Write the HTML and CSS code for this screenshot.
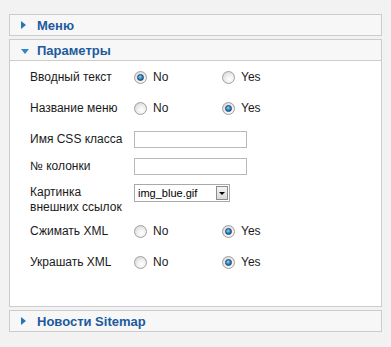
FILE: index.html
```html
<!DOCTYPE html>
<html lang="ru">
<head>
  <meta charset="UTF-8">
  <title>Параметры</title>
  <link rel="stylesheet" href="styles.css">
</head>
<body>
  <div class="pane">
    <div class="pane-title"><span class="arrow-right"></span>Меню</div>
  </div>

  <div class="pane">
    <div class="pane-title open"><span class="arrow-down"></span>Параметры</div>
    <div class="pane-body">
      <div class="row first">
        <div class="label">Вводный текст</div>
        <div class="options">
          <span class="opt"><span class="radio checked"></span>No</span>
          <span class="opt"><span class="radio"></span>Yes</span>
        </div>
      </div>
      <div class="row radio-row">
        <div class="label">Название меню</div>
        <div class="options">
          <span class="opt"><span class="radio"></span>No</span>
          <span class="opt"><span class="radio checked"></span>Yes</span>
        </div>
      </div>
      <div class="row input-row">
        <div class="label">Имя CSS класса</div>
        <div class="text-input"></div>
      </div>
      <div class="row input-row second">
        <div class="label">№ колонки</div>
        <div class="text-input"></div>
      </div>
      <div class="row select-row">
        <div class="label">Картинка<br>внешних ссылок</div>
        <div class="select">
          <span class="select-value">img_blue.gif</span>
          <span class="select-btn"><span class="select-caret"></span></span>
        </div>
      </div>
      <div class="row radio-row after-select">
        <div class="label">Сжимать XML</div>
        <div class="options">
          <span class="opt"><span class="radio"></span>No</span>
          <span class="opt"><span class="radio checked"></span>Yes</span>
        </div>
      </div>
      <div class="row radio-row">
        <div class="label">Украшать XML</div>
        <div class="options">
          <span class="opt"><span class="radio"></span>No</span>
          <span class="opt"><span class="radio checked"></span>Yes</span>
        </div>
      </div>
    </div>
  </div>

  <div class="pane">
    <div class="pane-title"><span class="arrow-right"></span>Новости Sitemap</div>
  </div>
</body>
</html>
```

FILE: styles.css
```css
body {
  margin: 14px 9px;
  background-color: #f2f2f2;
  font-family: "Liberation Sans", Arial, sans-serif;
  font-size: 12px;
  color: #1a1a1a;
}

.pane {
  border: 1px solid #cccccc;
  margin-bottom: 3px;
  background-color: #f7f7f7;
}

.pane-title {
  display: flex;
  align-items: center;
  height: 20px;
  padding-left: 11px;
  font-size: 13px;
  font-weight: bold;
  color: #1c5a9e;
}

.pane-title.open {
  border-bottom: 1px solid #cccccc;
}

.arrow-right {
  width: 0;
  height: 0;
  border-top: 4px solid transparent;
  border-bottom: 4px solid transparent;
  border-left: 5px solid #2477b5;
  margin-right: 11px;
}

.arrow-down {
  width: 0;
  height: 0;
  border-left: 4px solid transparent;
  border-right: 4px solid transparent;
  border-top: 5px solid #2d86c6;
  margin-right: 8px;
  margin-top: 2px;
}

.pane-body {
  background-color: #ffffff;
  padding: 9px 0 36px 20px;
}

.row {
  display: flex;
  align-items: center;
  line-height: 15px;
}

.label {
  width: 104px;
  flex-shrink: 0;
}

.radio-row {
  margin-top: 16px;
}

.after-select {
  margin-top: 9px;
}

.input-row {
  margin-top: 15px;
}

.input-row.second {
  margin-top: 10px;
}

.select-row {
  margin-top: 9px;
  align-items: flex-start;
}

.select-row .label {
  padding-top: 1px;
}

.options {
  display: flex;
}

.opt {
  display: flex;
  align-items: center;
  width: 88px;
}

.radio {
  position: relative;
  width: 11px;
  height: 11px;
  border: 1px solid #a0a0a0;
  border-radius: 50%;
  background: radial-gradient(circle at 60% 65%, #ffffff 0%, #f0f0f0 40%, #cfcfcf 100%);
  margin-right: 6px;
}

.radio.checked::after {
  content: "";
  position: absolute;
  left: 2px;
  top: 2px;
  width: 5px;
  height: 5px;
  border: 1px solid #1d3d5e;
  border-radius: 50%;
  background: radial-gradient(circle at 40% 35%, #8fd0ff 0%, #2b8acb 50%, #0f5a8f 100%);
}

.text-input {
  width: 111px;
  height: 15px;
  border: 1px solid #b9b9b9;
  background-color: #ffffff;
}

.select {
  display: flex;
  align-items: center;
  width: 94px;
  height: 16px;
  border: 1px solid #a9a9a9;
  background-color: #ffffff;
  font-size: 11px;
  color: #000;
}

.select-value {
  flex: 1;
  padding-left: 3px;
}

.select-btn {
  display: flex;
  align-items: center;
  justify-content: center;
  width: 10px;
  height: 12px;
  margin-right: 1px;
  border: 1px solid #8c8c8c;
  background: linear-gradient(#f4f4f4, #d9d9d9);
}

.select-caret {
  width: 0;
  height: 0;
  border-left: 3px solid transparent;
  border-right: 3px solid transparent;
  border-top: 3px solid #000;
  margin-top: 1px;
}
```
